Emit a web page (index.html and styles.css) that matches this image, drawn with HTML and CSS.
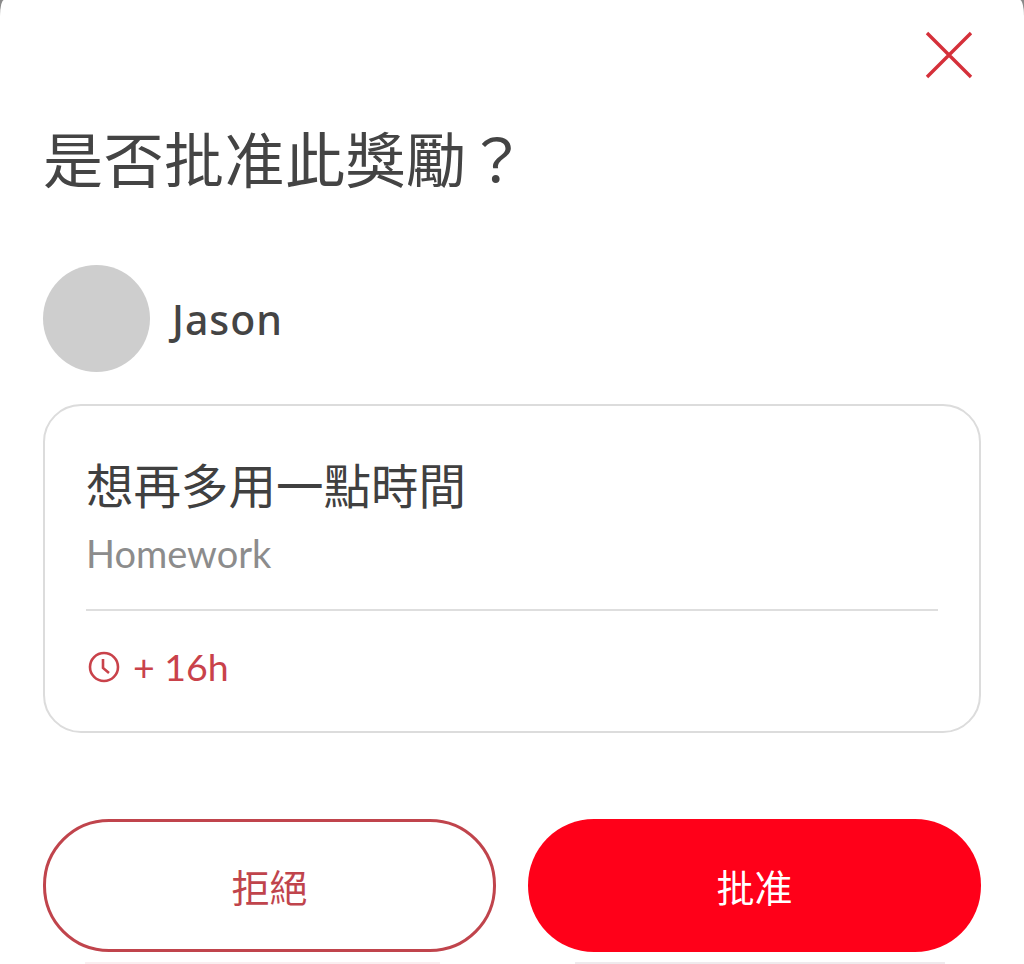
FILE: index.html

```html
<!DOCTYPE html>
<html lang="zh-Hant">
<head>
  <meta charset="UTF-8">
  <meta name="viewport" content="width=device-width, initial-scale=1.0">
  <title>是否批准此獎勵？</title>
  <link rel="stylesheet" href="styles.css">
</head>
<body>
  <!-- Approval sheet -->
  <div class="sheet">
    <div class="sheet-top">
      <button class="close-btn" aria-label="close">
        <svg width="48" height="48" viewBox="0 0 48 48">
          <path d="M2 2 L46 46 M46 2 L2 46" fill="none" stroke="#d5303a" stroke-width="3.4"/>
        </svg>
      </button>
    </div>

    <h1 class="title">是否批准此獎勵？</h1>

    <div class="user">
      <div class="avatar"></div>
      <div class="user-name">Jason</div>
    </div>

    <div class="card">
      <div class="card-title">想再多用一點時間</div>
      <div class="card-sub">Homework</div>
      <div class="card-line"></div>
      <div class="card-time">
        <svg class="clock" width="32" height="32" viewBox="0 0 32 32">
          <circle cx="16" cy="16" r="14" fill="none" stroke="#c9424a" stroke-width="2.6"/>
          <path d="M15 8 V17 L21 22" fill="none" stroke="#c9424a" stroke-width="2.6"/>
        </svg>
        <span>+ 16h</span>
      </div>
    </div>

    <div class="actions">
      <button class="btn btn-reject">拒絕</button>
      <button class="btn btn-approve">批准</button>
    </div>

    <!-- Edge of the list behind the sheet, just visible at the bottom -->
    <div class="peek">
      <div class="peek-left"></div>
      <div class="peek-right"></div>
    </div>
  </div>
</body>
</html>
```

FILE: styles.css

```css
/* General reset */
body, html {
  margin: 0;
  padding: 0;
  height: 964px;
  overflow: hidden;
  background: #8a8a8a;
  font-family: "Lato", "Noto Sans CJK TC", sans-serif;
}

.sheet {
  box-sizing: border-box;
  height: 964px;
  padding: 0 43px;
  background: #fff;
  border-radius: 4px 4px 0 0 / 16px 16px 0 0;
  overflow: hidden;
}

.sheet-top {
  display: flex;
  justify-content: flex-end;
  padding-top: 31px;
  margin-right: 8px;
}

.close-btn {
  padding: 0;
  border: 0;
  background: none;
  height: 48px;
  line-height: 0;
}

.title {
  margin: 42px 0 0;
  font-size: 60px;
  line-height: 72px;
  font-weight: 400;
  color: #444;
  font-family: "Noto Sans CJK TC", sans-serif;
  letter-spacing: 0.5px;
}

/* User row */
.user {
  display: flex;
  align-items: center;
  margin-top: 72px;
}

.avatar {
  width: 107px;
  height: 107px;
  border-radius: 50%;
  background: #cecece;
}

.user-name {
  margin-left: 22px;
  font-family: "Noto Sans", sans-serif;
  font-size: 41px;
  font-weight: 500;
  color: #444;
  letter-spacing: 1px;
}

/* Reward card */
.card {
  box-sizing: border-box;
  height: 329px;
  margin-top: 32px;
  padding: 47px 41px 0;
  border: 2px solid #dcdcdc;
  border-radius: 38px;
}

.card-title {
  font-size: 47.5px;
  line-height: 62px;
  font-weight: 400;
  color: #404040;
  font-family: "Noto Sans CJK TC", sans-serif;
}

.card-sub {
  margin-top: 14px;
  font-size: 38px;
  line-height: 48px;
  color: #8c8c8c;
}

.card-line {
  height: 2px;
  margin-top: 32px;
  background: #dedede;
}

.card-time {
  display: flex;
  align-items: center;
  gap: 13px;
  margin-top: 32px;
  font-size: 37.5px;
  line-height: 48px;
  color: #c9424a;
}

.clock {
  margin-left: 2px;
}

/* Buttons */
.actions {
  display: flex;
  justify-content: space-between;
  margin-top: 86px;
}

.btn {
  box-sizing: border-box;
  width: 453px;
  height: 133px;
  border-radius: 66px;
  font-size: 38px;
  font-family: "Noto Sans CJK TC", sans-serif;
}

.btn-reject {
  background: #fff;
  border: 3px solid #c0444c;
  color: #c0444c;
}

.btn-approve {
  background: #ff0019;
  border: 0;
  color: #fff;
}

.peek {
  display: flex;
  justify-content: space-between;
  margin-top: 10px;
  padding: 0 36px 0 42px;
}

.peek-left,
.peek-right {
  height: 2px;
}

.peek-left {
  width: 355px;
  background: #faeef0;
}

.peek-right {
  width: 370px;
  background: #efeaed;
}
```
